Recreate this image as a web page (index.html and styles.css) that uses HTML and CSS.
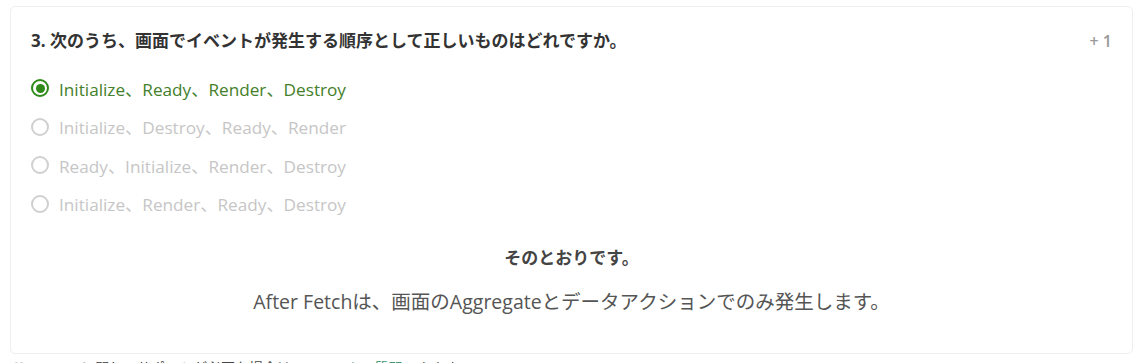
FILE: index.html
```html
<!DOCTYPE html>
<html lang="ja">
<head>
<meta charset="utf-8">
<link rel="stylesheet" href="styles.css">
</head>
<body>
<div class="card">
  <div class="head">
    <div class="title">3. 次のうち、画面でイベントが発生する順序として正しいものはどれですか。</div>
    <div class="points">+ 1</div>
  </div>
  <ul class="options">
    <li class="opt selected"><span class="radio"></span><span>Initialize、Ready、Render、Destroy</span></li>
    <li class="opt"><span class="radio"></span><span>Initialize、Destroy、Ready、Render</span></li>
    <li class="opt"><span class="radio"></span><span>Ready、Initialize、Render、Destroy</span></li>
    <li class="opt"><span class="radio"></span><span>Initialize、Render、Ready、Destroy</span></li>
  </ul>
  <div class="feedback">
    <div class="verdict">そのとおりです。</div>
    <div class="explain">After Fetchは、画面のAggregateとデータアクションでのみ発生します。</div>
  </div>
</div>
<p class="footer">このコースに関してサポートが必要な場合は<a href="#">フォーラム</a>で<a href="#">質問</a>できます。</p>
</body>
</html>
```

FILE: styles.css
```css
html, body {
  margin: 0;
  padding: 0;
  background: #ffffff;
}
body {
  font-family: "Open Sans", "Noto Sans CJK JP", sans-serif;
  color: #333333;
}
.card {
  margin: 6px 0 0 10px;
  width: 1123px;
  height: 348px;
  box-sizing: border-box;
  border: 1px solid #eeeeee;
  border-radius: 5px;
  padding: 0 20px 0 20px;
}
.head {
  display: flex;
  justify-content: space-between;
  align-items: center;
  height: 64px;
}
.title {
  font-size: 17px;
  font-weight: 700;
  color: #333333;
}
.points {
  font-size: 16px;
  font-weight: 600;
  color: #9a9a9a;
  padding-top: 4px;
}
.options {
  list-style: none;
  margin: -2px 0 0 0;
  padding: 0;
}
.opt {
  display: flex;
  align-items: center;
  gap: 10px;
  height: 38.5px;
  font-size: 17.2px;
  color: #c6c6c6;
}
.radio {
  width: 18px;
  height: 18px;
  box-sizing: border-box;
  border: 2px solid #d0d0d0;
  border-radius: 50%;
  display: flex;
  align-items: center;
  justify-content: center;
  flex: none;
}
.opt.selected {
  color: #44802a;
}
.opt.selected .radio {
  border-color: #2f8a1a;
}
.opt.selected .radio::after {
  content: "";
  width: 9px;
  height: 9px;
  border-radius: 50%;
  background: #2f8a1a;
}
.feedback {
  text-align: center;
  padding-top: 20px;
}
.verdict {
  font-size: 17px;
  font-weight: 700;
  color: #444444;
  line-height: 30px;
}
.explain {
  margin-top: 14px;
  font-size: 19.5px;
  color: #555555;
  line-height: 30px;
}
.footer {
  margin: 3px 0 0 12px;
  font-size: 14px;
  color: #444444;
}
.footer a {
  color: #1f8a5a;
  text-decoration: none;
}
```
